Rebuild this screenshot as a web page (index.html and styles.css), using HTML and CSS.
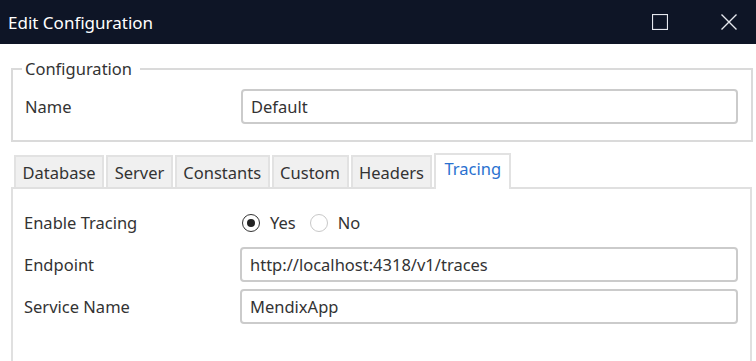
FILE: index.html
```html
<!DOCTYPE html>
<html lang="en">
<head>
  <meta charset="UTF-8" />
  <title>Edit Configuration</title>
  <link rel="stylesheet" href="styles.css">
</head>
<body>
  <div class="titlebar">
    <span class="title">Edit Configuration</span>
    <div class="win-buttons">
      <svg class="win-btn" width="16" height="16" viewBox="0 0 16 16"><rect x="0.5" y="0.5" width="15" height="15" fill="none" stroke="#e6e8ee" stroke-width="1.2"/></svg>
      <svg class="win-btn" width="16" height="16" viewBox="0 0 16 16"><path d="M0.5 0.5 L15.5 15.5 M15.5 0.5 L0.5 15.5" stroke="#e6e8ee" stroke-width="1.4"/></svg>
    </div>
  </div>

  <div class="content">
    <fieldset class="group">
      <legend>Configuration</legend>
      <div class="row">
        <label>Name</label>
        <input type="text" value="Default">
      </div>
    </fieldset>

    <div class="tabs">
      <div class="tab">Database</div>
      <div class="tab">Server</div>
      <div class="tab">Constants</div>
      <div class="tab">Custom</div>
      <div class="tab">Headers</div>
      <div class="tab active">Tracing</div>
    </div>
    <div class="panel">
      <div class="row">
        <label>Enable Tracing</label>
        <div class="radios">
          <span class="radio checked"></span><span class="radio-label">Yes</span>
          <span class="radio"></span><span class="radio-label">No</span>
        </div>
      </div>
      <div class="row">
        <label>Endpoint</label>
        <input type="text" value="http://localhost:4318/v1/traces">
      </div>
      <div class="row">
        <label>Service Name</label>
        <input type="text" value="MendixApp">
      </div>
    </div>
  </div>
</body>
</html>
```

FILE: styles.css
```css
body {
  margin: 0;
  width: 756px;
  height: 361px;
  overflow: hidden;
  background: #fff;
  font-family: "Noto Sans", "Open Sans", sans-serif;
  font-size: 16.5px;
  color: #333;
}
.titlebar {
  height: 44px;
  background: #0e1526;
  color: #fff;
  display: flex;
  align-items: center;
  padding-left: 8px;
}
.title {
  font-size: 17px;
  flex: 1;
}
.win-buttons {
  display: flex;
  gap: 53px;
  margin-right: 19px;
}
.win-btn {
  display: block;
}
.content {
  padding: 14px 3px 0 11px;
}
.group {
  margin: 0;
  border: 2px solid #dadada;
  padding: 9px 13px 16px 12px;
}
.group legend {
  padding: 0 8px 0 3px;
  margin-left: -3px;
  font-size: 16.5px;
  line-height: 22px;
}
.row {
  display: flex;
  align-items: center;
  height: 35px;
}
.row label {
  width: 216px;
  flex: none;
}
.row input {
  flex: 1;
  height: 35px;
  box-sizing: border-box;
  border: 2px solid #cbcbcb;
  border-radius: 4px;
  padding: 0 8px;
  font: inherit;
  color: #333;
  outline: none;
}
.tabs {
  display: flex;
  align-items: flex-end;
  margin: 11px 0 0 3px;
  gap: 2px;
}
.tab {
  height: 32px;
  box-sizing: border-box;
  padding: 2px 6.5px 0;
  background: #f0f0f0;
  border: 2px solid #e2e2e2;
  border-bottom: none;
  line-height: 27px;
}
.tab.active {
  height: 36px;
  background: #fff;
  color: #2a71d0;
  margin-bottom: -2px;
  padding: 0 8px;
  position: relative;
}
.panel {
  border: 2px solid #e0e0e0;
  border-bottom: none;
  margin-right: 1px;
  height: 156px;
  padding: 16px 12px 0 11px;
  display: flex;
  flex-direction: column;
  gap: 7px;
}
.radios {
  display: flex;
  align-items: center;
}
.radio {
  width: 18px;
  height: 18px;
  box-sizing: border-box;
  border: 1.5px solid #c8c8c8;
  border-radius: 50%;
  margin: 0 10px 0 2px;
  display: flex;
  align-items: center;
  justify-content: center;
}
.radio.checked {
  border-color: #333;
}
.radio.checked::after {
  content: "";
  width: 8px;
  height: 8px;
  border-radius: 50%;
  background: #222;
}
.radio-label {
  margin-right: 12px;
}
```
